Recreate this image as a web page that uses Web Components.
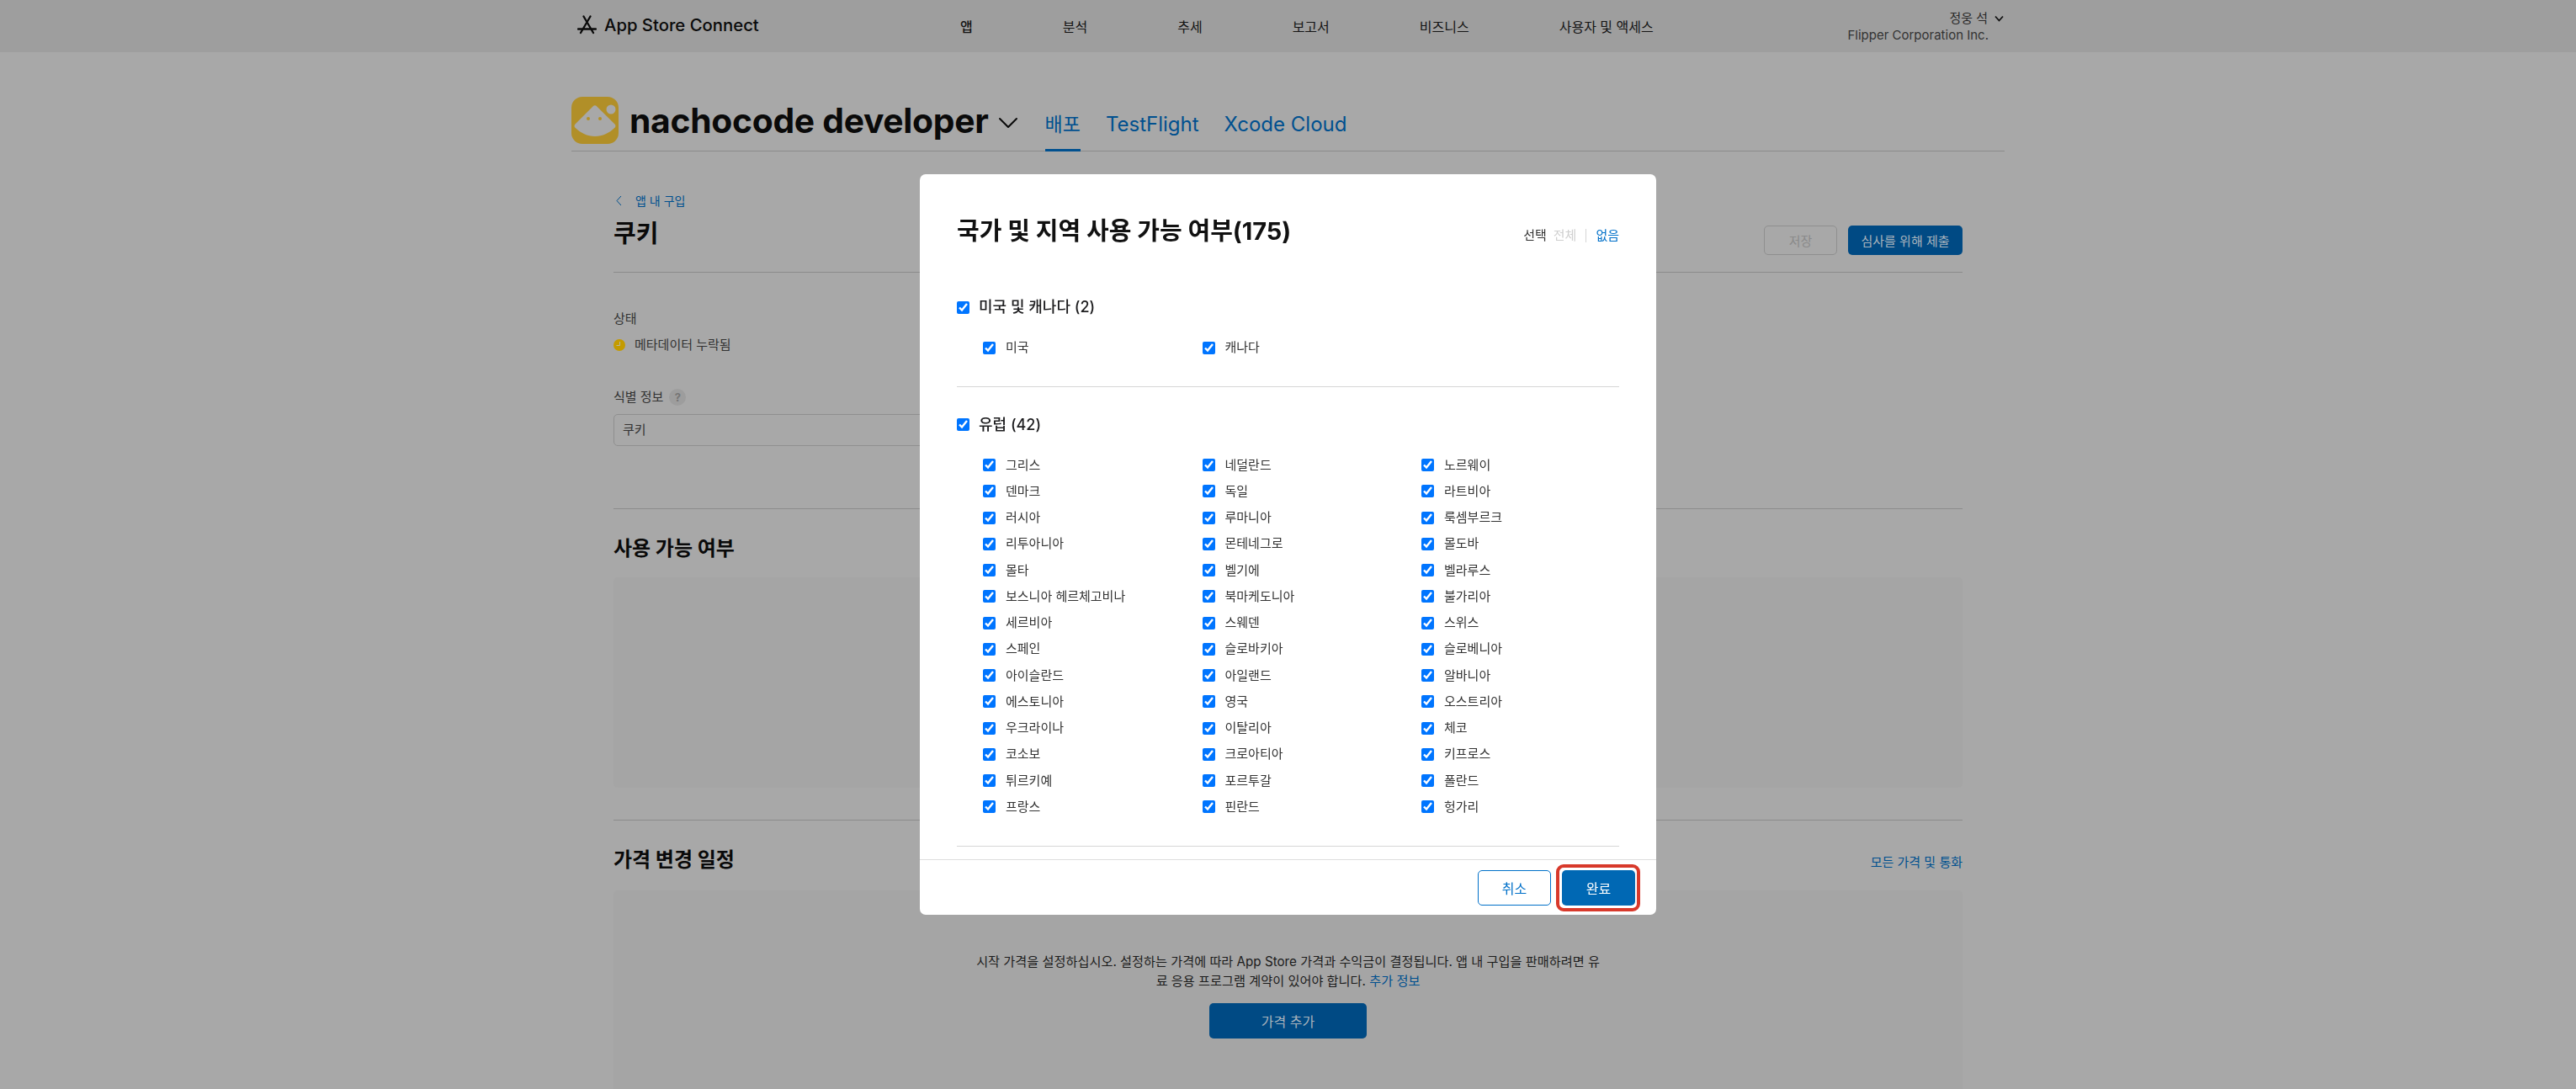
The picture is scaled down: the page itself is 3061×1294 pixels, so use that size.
<!DOCTYPE html>
<html lang="ko">
<head>
<meta charset="utf-8">
<title>App Store Connect</title>
<style>
  html, body { margin: 0; height: 100%; overflow: hidden; background: #a8a8a8; }
  body { font-family: Inter, "Noto Sans CJK KR", sans-serif; color: #0a0a0a; }
</style>
</head>
<body>
<asc-header></asc-header>
<app-bar></app-bar>
<iap-page></iap-page>
<region-dialog>
  <region-group label="미국 및 캐나다 (2)" items="미국,캐나다"></region-group>
  <region-group label="유럽 (42)" items="그리스,네덜란드,노르웨이,덴마크,독일,라트비아,러시아,루마니아,룩셈부르크,리투아니아,몬테네그로,몰도바,몰타,벨기에,벨라루스,보스니아 헤르체고비나,북마케도니아,불가리아,세르비아,스웨덴,스위스,스페인,슬로바키아,슬로베니아,아이슬란드,아일랜드,알바니아,에스토니아,영국,오스트리아,우크라이나,이탈리아,체코,코소보,크로아티아,키프로스,튀르키예,포르투갈,폴란드,프랑스,핀란드,헝가리"></region-group>
</region-dialog>
<script>
class Base extends HTMLElement {
  constructor() {
    super();
    this.attachShadow({ mode: 'open' });
    this.shadowRoot.innerHTML = this.markup();
  }
}
customElements.define('asc-header', class extends Base {
  markup() { return `
<style>
  :host { display: flex; align-items: center; height: 62px; background: #9e9e9e; padding: 0 680px 0 686px; box-sizing: content-box; }
  .logo { width: 455px; display: flex; align-items: center; gap: 9px; font-size: 20.300px; font-weight: 500; flex: none; margin-top: -4px; }
  nav { display: flex; gap: 107px; font-size: 16px; line-height: 20px; color: #141414; margin-top: 2px; }
  nav b { font-weight: 500; }
  .user { margin-left: auto; text-align: right; font-size: 15px; line-height: 20px; color: #2a2a2a; margin-top: 2px; }
  .u1 { display: flex; justify-content: flex-end; align-items: center; gap: 8px; }
  .u2 { padding-right: 18px; color: #333; }
</style>
<div class="logo">
  <svg width="23" height="23" viewBox="0 0 23 23" fill="none" stroke="#0a0a0a" stroke-width="2.300" stroke-linecap="round"><path d="M15.500 1.500 4 21M7.500 1.500 19 21M1 16.500h21"/></svg>
  <span>App Store Connect</span>
</div>
<nav><b>앱</b><span>분석</span><span>추세</span><span>보고서</span><span>비즈니스</span><span>사용자 및 액세스</span></nav>
<div class="user">
  <div class="u1"><span>정웅 석</span><svg width="11" height="8" viewBox="0 0 11 8" fill="none" stroke="#111" stroke-width="1.800"><path d="M1 1.500 5.500 6.500 10 1.500"/></svg></div>
  <div class="u2">Flipper Corporation Inc.</div>
</div>`; }
});
customElements.define('app-bar', class extends Base {
  markup() { return `
<style>
  :host { display: block; width: 1703px; height: 118px; margin: 0 auto; box-sizing: border-box; border-bottom: 1px solid #8b8b8b; }
  .row { display: flex; align-items: flex-start; margin-top: 0; padding-top: 53px; height: 64px; }
  svg.icon { flex: none; }
  h1 { margin: 0 0 0 13px; font-size: 40.800px; line-height: 56px; font-weight: 700; letter-spacing: -.3px; white-space: nowrap; }
  .chev { margin: 24px 32px 0 11px; flex: none; }
  .tabs { display: flex; gap: 30px; font-size: 24px; line-height: 56px; color: #00508f; align-self: flex-end; margin-bottom: -1px; }
  .tabs span { display: block; height: 60px; box-sizing: border-box; white-space: nowrap; }
  .tabs .on { border-bottom: 3px solid #00508f; font-size: 23px; }
</style>
<div class="row">
  <svg class="icon" width="56" height="56" viewBox="0 0 56 56">
    <rect width="56" height="56" rx="13" fill="#b18f28"/>
    <path d="M25.500 11.500c1.400-1.700 3.400-1.700 4.800 0L51.500 32.500c1.500 1.500 1.200 3.500-.5 4.800C45 43 37 47 28 47 19 47 11 43 5 37.300c-1.700-1.300-2-3.300-.5-4.800Z" fill="#a8a8a8"/>
    <circle cx="47" cy="15" r="5.500" fill="#a8a8a8"/>
    <circle cx="20" cy="26" r="2" fill="#b18f28"/><circle cx="34" cy="26" r="2" fill="#b18f28"/>
  </svg>
  <h1>nachocode developer</h1>
  <svg class="chev" width="24" height="14" viewBox="0 0 24 14" fill="none" stroke="#0a0a0a" stroke-width="2" stroke-linecap="round" stroke-linejoin="round"><path d="M2 2 12 12 22 2"/></svg>
  <div class="tabs"><span class="on">배포</span><span>TestFlight</span><span>Xcode Cloud</span></div>
</div>`; }
});
customElements.define('iap-page', class extends Base {
  markup() { return `
<style>
  :host { display: block; width: 1603px; margin: 0 auto; padding-top: 48px; color: #0a0a0a; }
  a { color: #00508f; text-decoration: none; }
  .back { display: flex; align-items: center; height: 20px; font-size: 14px; gap: 16px; padding-left: 3px; }
  .head { display: flex; align-items: flex-start; justify-content: space-between; margin-top: 10px; padding-bottom: 20px; border-bottom: 1px solid #8b8b8b; }
  h1 { margin: 0; font-size: 29px; line-height: 40px; font-weight: 700; }
  .btns { display: flex; gap: 13px; margin-top: 10px; }
  .btn { box-sizing: border-box; height: 35px; border-radius: 5px; font-size: 15px; display: flex; align-items: center; justify-content: center; }
  .save { width: 87px; border: 1px solid #8f8f8f; color: #8a8a8a; }
  .submit { width: 136px; background: #004a84; color: #aab4bd; }
  .lbl { font-size: 15px; line-height: 20px; color: #333; }
  .status { display: flex; align-items: center; gap: 11px; margin-top: 11px; font-size: 15px; line-height: 20px; color: #333; }
  .id { display: flex; align-items: center; gap: 7px; margin-top: 42px; }
  .q { width: 20px; height: 20px; border-radius: 50%; background: #9d9d9d; color: #757575; font-size: 13px; font-weight: 700; display: flex; align-items: center; justify-content: center; }
  .input { box-sizing: border-box; width: 700px; height: 38px; margin-top: 10px; border: 1px solid #8f8f8f; border-radius: 5px; padding: 0 10px; font-size: 15px; line-height: 36px; color: #333; }
  .sec { border-top: 1px solid #8b8b8b; padding-top: 29px; }
  .sec1 { margin-top: 74px; }
  .sec2 { margin-top: 38px; }
  .sechead { display: flex; justify-content: space-between; align-items: center; }
  h2 { margin: 0; font-size: 24px; line-height: 36px; font-weight: 700; }
  .link { font-size: 15px; line-height: 20px; padding-top: 5px; }
  .box { background: #a5a5a5; border-radius: 5px; }
  .b1 { height: 250px; margin-top: 16px; }
  .b2 { height: 300px; margin-top: 18px; padding-top: 73px; box-sizing: border-box; display: flex; flex-direction: column; align-items: center; }
  .b2 div.t { text-align: center; font-size: 15.200px; line-height: 23px; color: #1c1c1c; white-space: nowrap; }
  .add { width: 187px; height: 42px; margin-top: 15px; border-radius: 5px; background: #004a84; color: #aab4bd; font-size: 16px; display: flex; align-items: center; justify-content: center; }
</style>
<div class="back">
  <svg width="7" height="13" viewBox="0 0 7 13" fill="none" stroke="#00508f" stroke-width="1"><path d="M6 1 1 6.500 6 12"/></svg>
  <a>앱 내 구입</a>
</div>
<div class="head">
  <h1>쿠키</h1>
  <div class="btns"><div class="btn save">저장</div><div class="btn submit">심사를 위해 제출</div></div>
</div>
<div class="lbl" style="margin-top:45px">상태</div>
<div class="status">
  <svg width="14" height="14" viewBox="0 0 14 14"><circle cx="7" cy="7" r="7" fill="#c49b00"/><path d="M7.500 3v4.500H3.500" fill="none" stroke="#b8b8a0" stroke-width="1"/></svg>
  <span>메타데이터 누락됨</span>
</div>
<div class="id"><span class="lbl">식별 정보</span><span class="q">?</span></div>
<div class="input">쿠키</div>
<div class="sec sec1">
  <h2>사용 가능 여부</h2>
  <div class="box b1"></div>
</div>
<div class="sec sec2">
  <div class="sechead"><h2>가격 변경 일정</h2><a class="link">모든 가격 및 통화</a></div>
  <div class="box b2">
    <div class="t">시작 가격을 설정하십시오. 설정하는 가격에 따라 App Store 가격과 수익금이 결정됩니다. 앱 내 구입을 판매하려면 유</div>
    <div class="t">료 응용 프로그램 계약이 있어야 합니다. <a>추가 정보</a></div>
    <div class="add">가격 추가</div>
  </div>
</div>`; }
});
customElements.define('country-check', class extends Base {
  markup() { return `
<style>
  :host { display: flex; align-items: center; gap: 12px; font-size: 15px; line-height: 20px; color: #333; white-space: nowrap; }
  input { width: 15px; height: 15px; margin: 0; flex: none; }
</style>
<input type="checkbox" checked><slot></slot>`; }
});
customElements.define('region-group', class extends Base {
  markup() { return `
<style>
  :host { display: block; padding-bottom: 30px; margin-bottom: 35px; border-bottom: 1px solid #d6d6d6; }
  .top { display: flex; align-items: center; gap: 11px; font-size: 18px; line-height: 20px; font-weight: 500; color: #1d1d1f; }
  input { width: 15px; height: 15px; margin: 0; flex: none; }
  .grid { display: grid; grid-template-columns: repeat(3, 260.500px); grid-auto-rows: 31.250px; margin-top: 22.400px; padding-left: 31px; }
</style>
<label class="top"><input type="checkbox" checked><span id="l"></span></label>
<div class="grid"><slot></slot></div>`; }
  connectedCallback() {
    this.shadowRoot.getElementById('l').textContent = this.getAttribute('label');
    if (!this.children.length) {
      for (const t of this.getAttribute('items').split(',')) {
        const c = document.createElement('country-check');
        c.textContent = t;
        this.appendChild(c);
      }
    }
  }
});
customElements.define('region-dialog', class extends Base {
  markup() { return `
<style>
  :host { position: fixed; inset: 0; display: flex; align-items: center; justify-content: center; }
  .panel { width: 875px; height: 880px; background: #fff; border-radius: 7px; display: flex; flex-direction: column; overflow: hidden; }
  .hd { display: flex; align-items: center; justify-content: space-between; padding: 48px 44px 0; height: 40px; flex: none; }
  h2 { margin: 0; font-size: 29px; line-height: 40px; font-weight: 700; color: #111; }
  .sel { display: flex; align-items: center; font-size: 15px; line-height: 20px; margin-top: 10px; color: #333; }
  .sel .off { color: #cfcfcf; margin-left: 8px; }
  .sel i { width: 1px; height: 16px; background: #d6d6d6; margin: 0 11px; }
  .sel a { color: #0070c9; }
  .body { flex: 1; min-height: 0; overflow: hidden; padding: 60px 44px 0; }
  .ft { flex: none; height: 66px; box-sizing: border-box; border-top: 1px solid #ddd; display: flex; justify-content: flex-end; gap: 13px; padding: 12px 25px 0 0; }
  .b { box-sizing: border-box; width: 87px; height: 42px; border-radius: 5px; font-size: 16px; display: flex; align-items: center; justify-content: center; position: relative; }
  .cancel { border: 1px solid #0070c9; color: #0070c9; }
  .done { background: #0068b4; color: #fff; }
  .done::after { content: ""; position: absolute; inset: -7px -6px -7px -7px; border: 4px solid #d8392b; border-radius: 9px; box-sizing: border-box; }
</style>
<div class="panel">
  <div class="hd"><h2>국가 및 지역 사용 가능 여부(175)</h2>
    <div class="sel"><span>선택</span><span class="off">전체</span><i></i><a>없음</a></div></div>
  <div class="body"><slot></slot></div>
  <div class="ft"><div class="b cancel">취소</div><div class="b done">완료</div></div>
</div>`; }
});
</script>
</body>
</html>
